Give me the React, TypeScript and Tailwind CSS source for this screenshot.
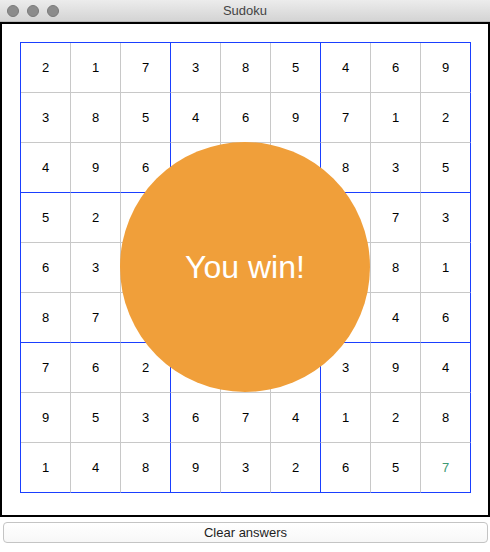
// 0 marks a cell that sits under the win badge
const board: number[][] = [
  [2, 1, 7, 3, 8, 5, 4, 6, 9],
  [3, 8, 5, 4, 6, 9, 7, 1, 2],
  [4, 9, 6, 0, 0, 0, 8, 3, 5],
  [5, 2, 0, 0, 0, 0, 0, 7, 3],
  [6, 3, 0, 0, 0, 0, 0, 8, 1],
  [8, 7, 0, 0, 0, 0, 0, 4, 6],
  [7, 6, 2, 0, 0, 0, 3, 9, 4],
  [9, 5, 3, 6, 7, 4, 1, 2, 8],
  [1, 4, 8, 9, 3, 2, 6, 5, 7],
];

function Cell({ value, row, col }: { value: number; row: number; col: number }) {
  const boxRight = col === 2 || col === 5;
  const boxBottom = row === 2 || row === 5;
  const right = col === 8 || boxRight ? "border-r-[#1a3fff]" : "border-r-[#c8c8c8]";
  const bottom = row === 8 || boxBottom ? "border-b-[#1a3fff]" : "border-b-[#c8c8c8]";
  const green = row === 8 && col === 8;
  return (
    <div
      className={`w-[50px] h-[50px] border-r border-b ${right} ${bottom} flex items-center justify-center text-[13px] ${
        green ? "text-[#3f9a74]" : "text-black"
      }`}
    >
      {value > 0 ? value : null}
    </div>
  );
}

export default function App() {
  return (
    <div
      className="w-[490px] h-[552px] bg-white flex flex-col"
      style={{ fontFamily: '"Liberation Sans", Arial, sans-serif' }}
    >
      {/* title bar */}
      <div className="h-[22px] relative flex items-center justify-center bg-gradient-to-b from-[#ececec] to-[#d4d4d4] border-b border-[#b8b8b8]">
        <div className="absolute left-[7px] top-[5px] flex gap-[8px]">
          <span className="w-[12px] h-[12px] rounded-full bg-[#8c8c8c] border border-[#7a7a7a]" />
          <span className="w-[12px] h-[12px] rounded-full bg-[#8c8c8c] border border-[#7a7a7a]" />
          <span className="w-[12px] h-[12px] rounded-full bg-[#8c8c8c] border border-[#7a7a7a]" />
        </div>
        <span className="text-[13px] text-[#444]">Sudoku</span>
      </div>

      {/* board frame */}
      <div className="border-2 border-black pt-[18px] pl-[18px] pb-[22px]">
        <div className="relative w-[451px] border-l border-t border-[#1a3fff] grid grid-cols-9">
          {board.map((r, ri) =>
            r.map((v, ci) => <Cell key={`${ri}-${ci}`} value={v} row={ri} col={ci} />)
          )}
          <div className="absolute left-[99px] top-[99px] w-[250px] h-[250px] rounded-full bg-[#f09f3a] flex items-center justify-center">
            <span className="text-white text-[32px]">You win!</span>
          </div>
        </div>
      </div>

      {/* button */}
      <div className="px-[3px] pt-[5px]">
        <button className="w-[485px] h-[21px] rounded-[4px] border border-[#c4c4c4] bg-gradient-to-b from-white to-[#f7f7f7] text-[13px] text-[#1e1e1e] flex items-center justify-center">
          Clear answers
        </button>
      </div>
    </div>
  );
}
